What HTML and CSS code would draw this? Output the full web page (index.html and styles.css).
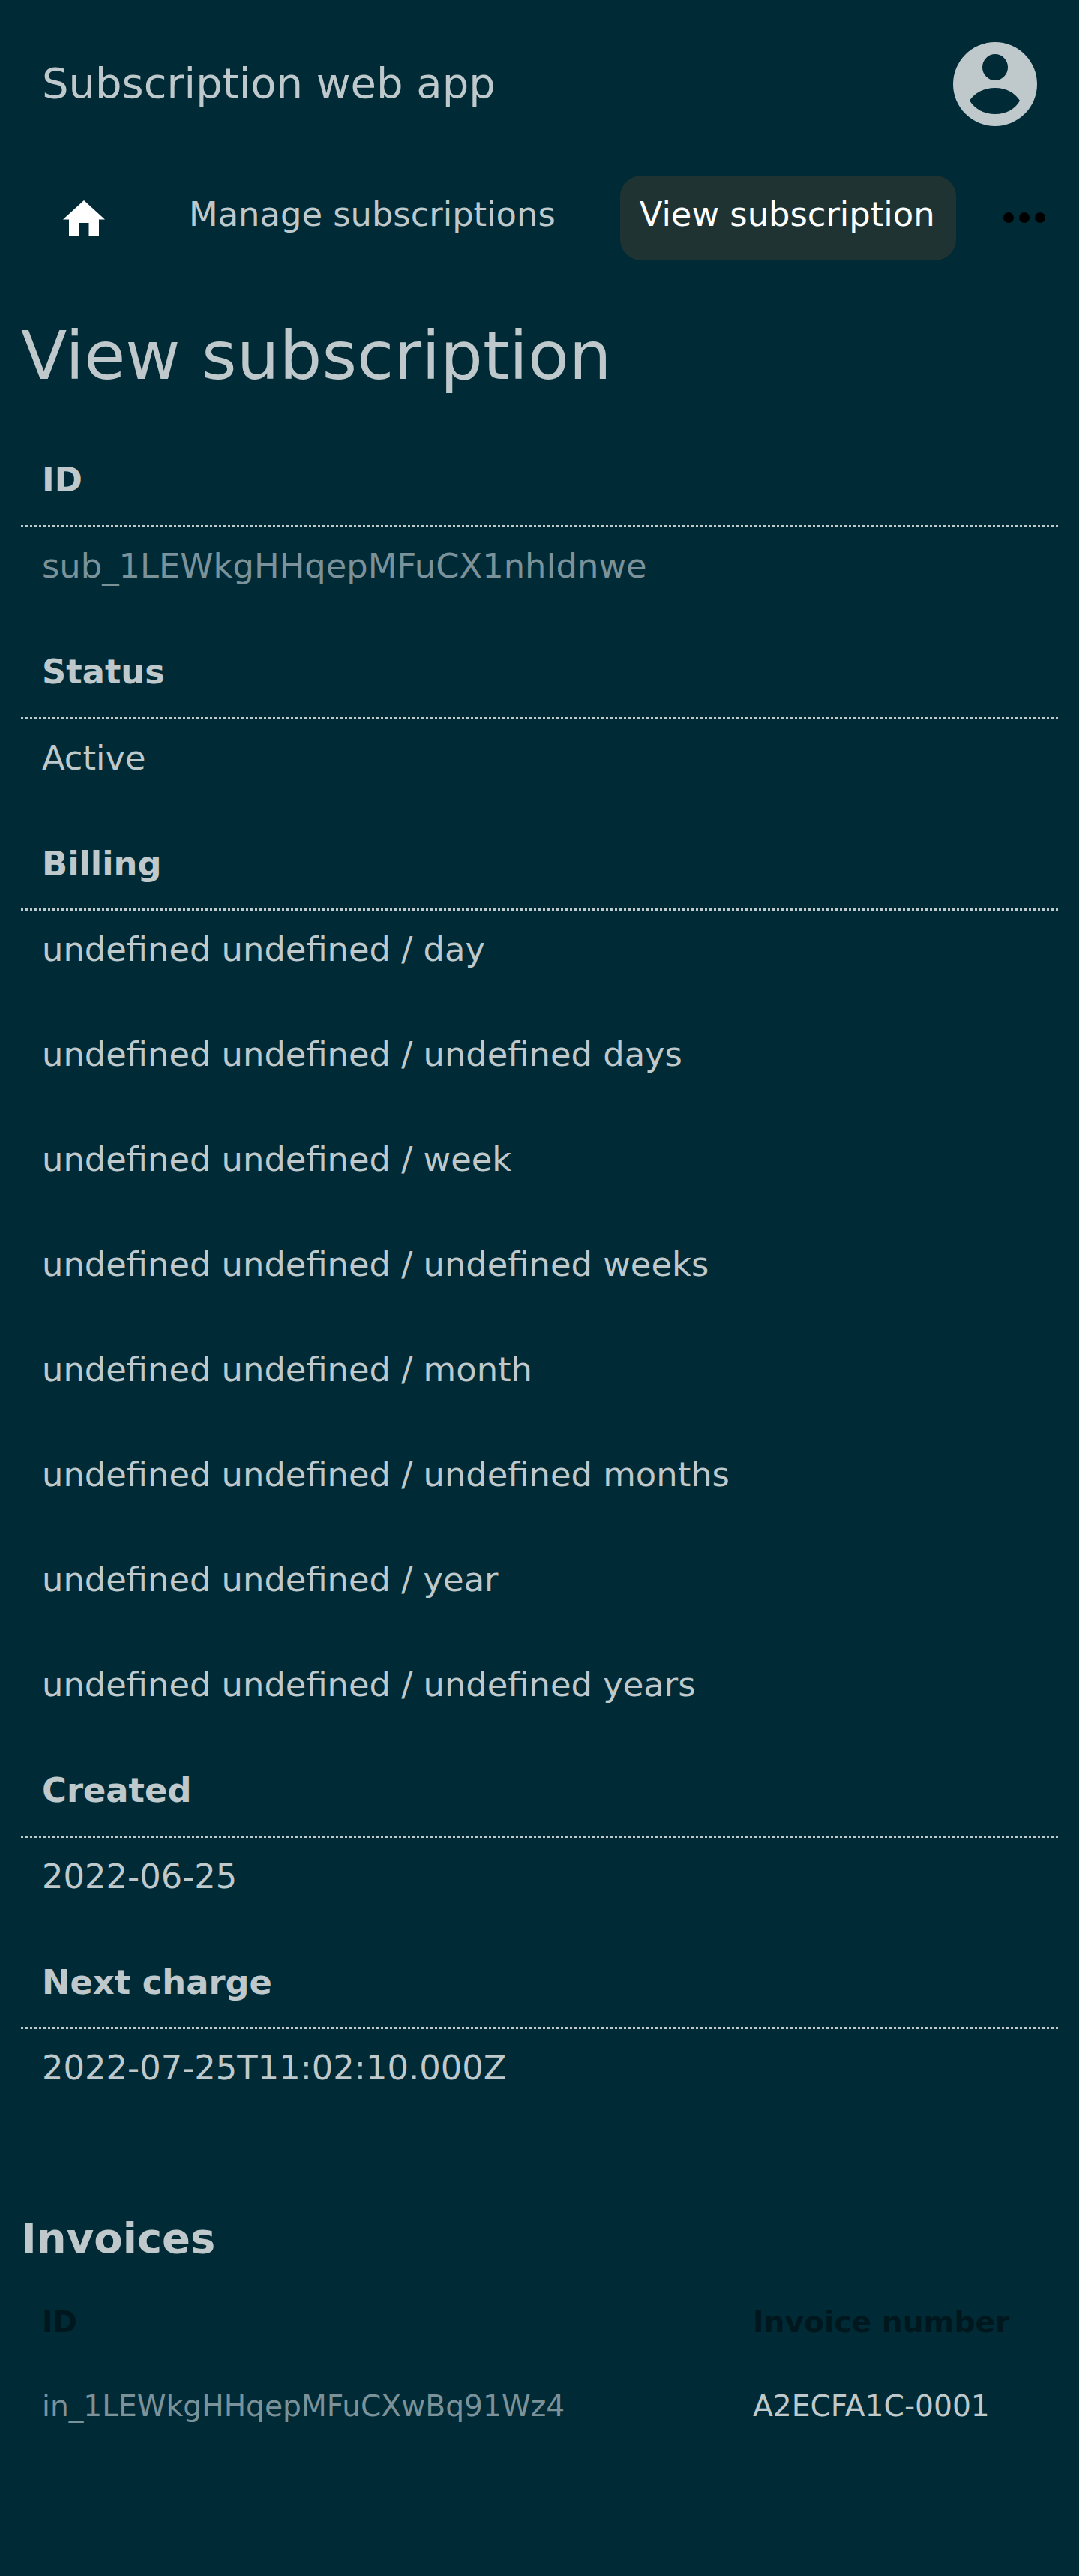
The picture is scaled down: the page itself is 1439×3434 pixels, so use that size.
FILE: index.html
```html
<!DOCTYPE html>
<html lang="en">
<head>
<meta charset="utf-8">
<title>View subscription</title>
<link rel="stylesheet" href="styles.css">
</head>
<body>
<header class="topbar">
  <div class="brand">Subscription web app</div>
  <svg class="avatar" viewBox="0 0 112 112" aria-hidden="true">
    <path fill-rule="evenodd" d="M56 0a56 56 0 1 1 0 112a56 56 0 1 1 0-112zM56 16a17 17.500 0 1 0 0 35a17 17.500 0 1 0 0-35zM56 61C41 61 28 68 22 78C29 89 41 96 56 96C71 96 83 89 89 78C83 68 71 61 56 61z"/>
  </svg>
</header>
<nav class="nav">
  <a class="nav-home" aria-label="Home">
    <svg class="home-icon" viewBox="0 0 56 48" aria-hidden="true"><path d="M28 0L56 25.500H48V48H34.500V30H21.500V48H8V25.500H0z"/></svg>
  </a>
  <a class="nav-link">Manage subscriptions</a>
  <a class="nav-link active">View subscription</a>
  <span class="nav-more" aria-label="More"><i></i><i></i><i></i></span>
</nav>
<main class="main">
  <h1 class="page-title">View subscription</h1>
  <section class="field">
    <h3 class="label">ID</h3>
    <p class="value muted">sub_1LEWkgHHqepMFuCX1nhIdnwe</p>
  </section>
  <section class="field">
    <h3 class="label">Status</h3>
    <p class="value">Active</p>
  </section>
  <section class="field">
    <h3 class="label">Billing</h3>
    <p class="value">undefined undefined / day</p>
    <p class="value">undefined undefined / undefined days</p>
    <p class="value">undefined undefined / week</p>
    <p class="value">undefined undefined / undefined weeks</p>
    <p class="value">undefined undefined / month</p>
    <p class="value">undefined undefined / undefined months</p>
    <p class="value">undefined undefined / year</p>
    <p class="value">undefined undefined / undefined years</p>
  </section>
  <section class="field">
    <h3 class="label">Created</h3>
    <p class="value">2022-06-25</p>
  </section>
  <section class="field">
    <h3 class="label">Next charge</h3>
    <p class="value">2022-07-25T11:02:10.000Z</p>
  </section>
  <h2 class="section-title">Invoices</h2>
  <table class="invoices">
    <thead>
      <tr><th class="col-id">ID</th><th>Invoice number</th></tr>
    </thead>
    <tbody>
      <tr><td class="muted">in_1LEWkgHHqepMFuCXwBq91Wz4</td><td>A2ECFA1C-0001</td></tr>
    </tbody>
  </table>
</main>
</body>
</html>
```
FILE: styles.css
```css
* { box-sizing: border-box; }
html, body { margin: 0; }
body {
  background: #002b36;
  color: #bfc9cc;
  font-family: "DejaVu Sans", sans-serif;
  font-size: 44.8px;
  line-height: 1.5;
  min-height: 3434px;
}
.topbar {
  display: flex;
  align-items: center;
  justify-content: space-between;
  height: 224px;
  padding: 0 56px;
}
.brand { font-size: 56px; margin-top: -2px; }
.avatar { width: 112px; height: 112px; fill: #bfc9cc; }
.nav {
  display: flex;
  align-items: flex-start;
  padding: 10px 0 0 84px;
}
.nav-home { display: flex; width: 56px; margin-top: 33px; }
.home-icon { width: 56px; height: 48px; fill: #fff; }
.nav-link {
  padding: 18px 28px 28px;
  height: 113px;
  border-radius: 28px;
  white-space: nowrap;
}
.nav-home + .nav-link { margin-left: 84px; }
.nav-link.active { background: #1f3333; color: #fff; margin-left: 58px; padding-left: 26px; }
.nav-more { display: flex; gap: 7px; margin: 49px 0 0 63px; }
.nav-more i { width: 14px; height: 14px; border-radius: 50%; background: #000; }
.main { padding: 0 28px; }
.page-title { margin: 60px 0 46px; font-size: 89.6px; font-weight: 400; line-height: 1.5; }
.label {
  margin: 0;
  padding: 19px 28px 26.4px;
  font-size: 44.8px;
  font-weight: 700;
  border-bottom: 3px dotted #bfc9cc;
}
.value { margin: 0; padding: 18px 28px 55px; height: 140px; }
.muted { color: #7b929a; }
.section-title { margin: 97px 0 27px; font-size: 56px; font-weight: 700; }
.invoices { width: 100%; border-collapse: collapse; font-size: 39.2px; }
.invoices th { color: #01171e; text-align: left; padding: 14px 28px; font-weight: 700; }
.invoices .col-id { width: 948px; }
.invoices td { padding: 39px 28px; }
```
